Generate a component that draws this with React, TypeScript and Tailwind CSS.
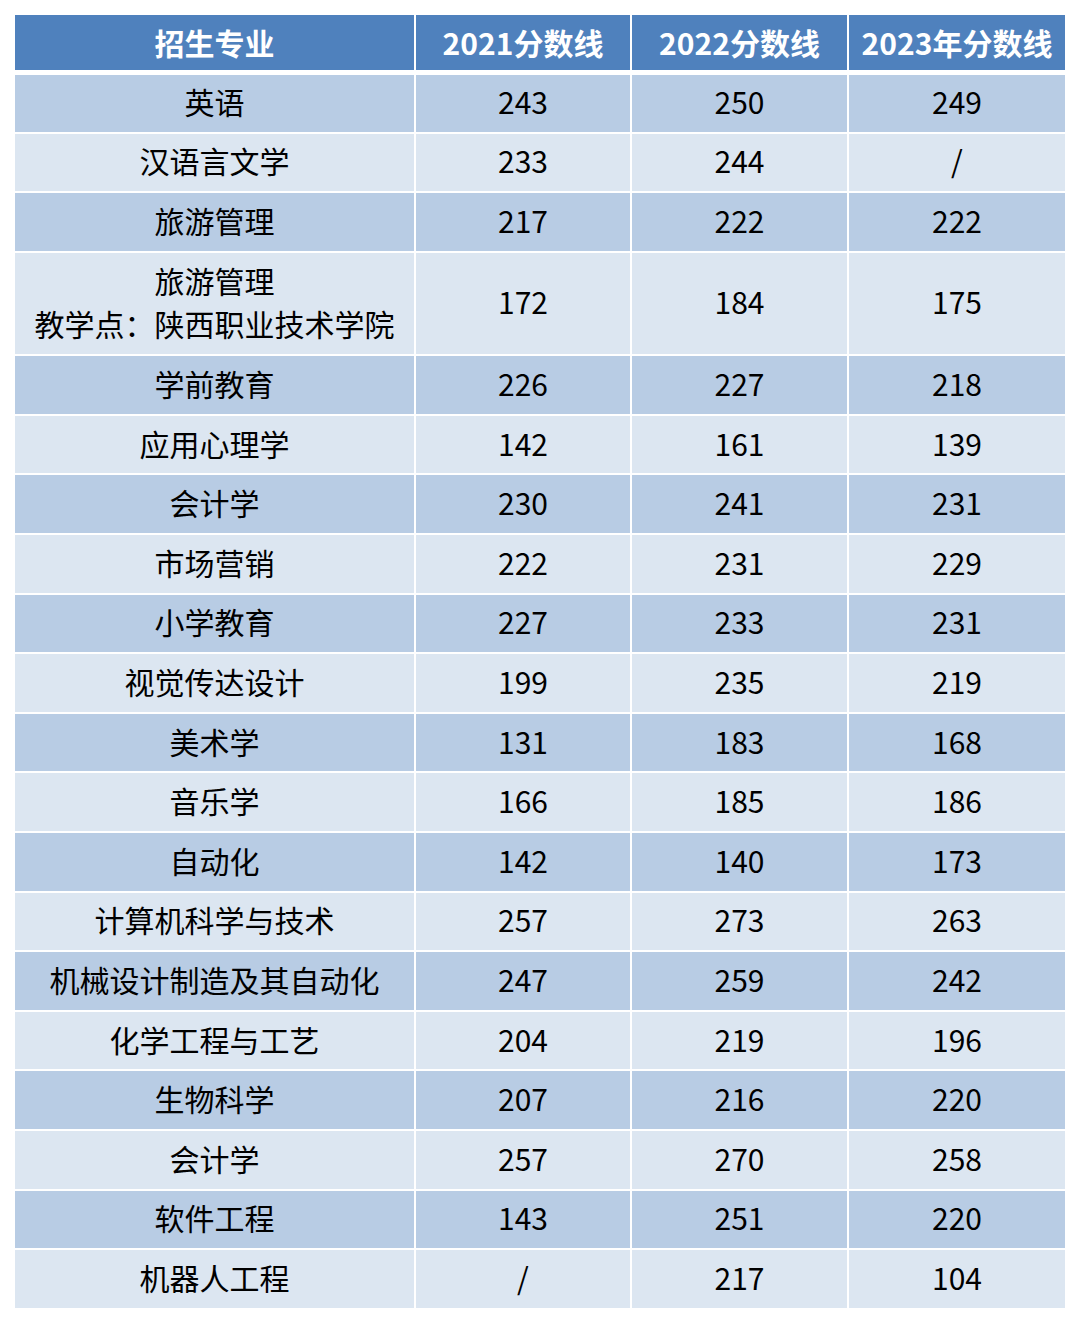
const rows: [string, string, string, string][] = [
  ["英语", "243", "250", "249"],
  ["汉语言文学", "233", "244", "/"],
  ["旅游管理", "217", "222", "222"],
  ["旅游管理\n教学点：陕西职业技术学院", "172", "184", "175"],
  ["学前教育", "226", "227", "218"],
  ["应用心理学", "142", "161", "139"],
  ["会计学", "230", "241", "231"],
  ["市场营销", "222", "231", "229"],
  ["小学教育", "227", "233", "231"],
  ["视觉传达设计", "199", "235", "219"],
  ["美术学", "131", "183", "168"],
  ["音乐学", "166", "185", "186"],
  ["自动化", "142", "140", "173"],
  ["计算机科学与技术", "257", "273", "263"],
  ["机械设计制造及其自动化", "247", "259", "242"],
  ["化学工程与工艺", "204", "219", "196"],
  ["生物科学", "207", "216", "220"],
  ["会计学", "257", "270", "258"],
  ["软件工程", "143", "251", "220"],
  ["机器人工程", "/", "217", "104"]
];

const headers = ["招生专业", "2021分数线", "2022分数线", "2023年分数线"];

function Row(props: { row: [string, string, string, string]; index: number }) {
  const isDouble = props.row[0].includes("\n");
  const bg = props.index % 2 === 0 ? "bg-[#b8cce4]" : "bg-[#dce6f1]";
  const height = isDouble ? "h-[101.5px]" : props.index === 0 ? "h-[56.5px]" : "h-[57.6px]";

  return (
    <div className={`grid grid-cols-[399px_214px_215px_216px] gap-x-[2px] ${height}`}>
      {props.row.map((cell, i) => (
        <div key={i} className={`flex flex-col items-center justify-center pb-[3px] ${bg} text-center`}>
          {cell.split("\n").map((line, j) => (
            <span key={j} className={"leading-[43px]"}>
              {line}
            </span>
          ))}
        </div>
      ))}
    </div>
  );
}

function App() {
  return (
    <div
      className={"min-h-[1324px] w-[1080px] bg-white pl-[15px] pt-[15px] text-[30px] text-black"}
      style={{ fontFamily: '"Noto Sans CJK SC", "Noto Sans", sans-serif' }}
    >
      <div className={"flex w-[1050px] flex-col gap-y-[2px]"}>
        <div className={"mb-[3px] grid h-[55px] grid-cols-[399px_214px_215px_216px] gap-x-[2px]"}>
          {headers.map((h) => (
            <div key={h} className={"flex items-center justify-center bg-[#4f81bd] font-bold text-white"}>
              {h}
            </div>
          ))}
        </div>
        {rows.map((row, index) => (
          <Row row={row} index={index} key={`row-${index}`} />
        ))}
      </div>
    </div>
  );
}

export default App;
